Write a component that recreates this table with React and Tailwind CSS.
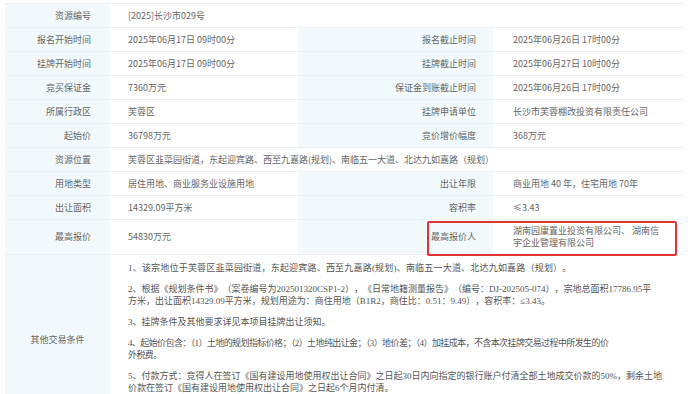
import React from "react";

const font = { fontFamily: '"Noto Sans CJK SC", "Noto Sans", sans-serif' };

function Label({ children, className = "" }) {
  return (
    <div className={"bg-[#f1f9fd] flex items-center justify-end pr-[19px] text-[#666] whitespace-nowrap " + className}>
      {children}
    </div>
  );
}
function RLabel({ children }) {
  return (
    <div className="bg-[#f1f9fd] flex items-center justify-end pr-[17px] text-[#666] whitespace-nowrap">
      {children}
    </div>
  );
}
function Val({ children, className = "" }) {
  return <div className={"flex items-center pl-[18px] text-[#666] whitespace-nowrap " + className}>{children}</div>;
}
function RVal({ children, className = "" }) {
  return <div className={"flex items-center pl-[20px] pr-[20px] text-[#666] " + className}>{children}</div>;
}

const rowCls = "grid grid-cols-[105px_188px_195px_190px] h-[24px] border-b border-[#eceff1]";

export default function App() {
  const rows = [
    ["报名开始时间", "2025年06月17日 09时00分", "报名截止时间", "2025年06月26日 17时00分"],
    ["挂牌开始时间", "2025年06月17日 09时00分", "挂牌截止时间", "2025年06月27日 10时00分"],
    ["竞买保证金", "7360万元", "保证金到账截止时间", "2025年06月26日 17时00分"],
    ["所属行政区", "芙蓉区", "挂牌申请单位", "长沙市芙蓉棚改投资有限责任公司"],
    ["起始价", "36798万元", "竞价增价幅度", "368万元"],
  ];
  const contentFont = { fontFamily: '"Liberation Serif", "Noto Sans CJK SC", serif' };
  return (
    <div className="w-[692px] h-[394px] overflow-hidden bg-white text-[9px] leading-[12px]" style={font}>
      <div className="pt-[3px] pl-[5px]">
        <div className="w-[678px] border-t border-[#eceff1]">
          <div className="grid grid-cols-[105px_573px] h-[24px] border-b border-[#eceff1]">
            <Label>资源编号</Label>
            <Val>[2025]长沙市029号</Val>
          </div>
          {rows.map((r) => (
            <div key={r[0]} className={rowCls}>
              <Label>{r[0]}</Label>
              <Val>{r[1]}</Val>
              <RLabel>{r[2]}</RLabel>
              <RVal>{r[3]}</RVal>
            </div>
          ))}
          <div className="grid grid-cols-[105px_573px] h-[24px] border-b border-[#eceff1]">
            <Label>资源位置</Label>
            <Val>芙蓉区韭菜园街道，东起迎宾路、西至九嘉路(规划)、南临五一大道、北达九如嘉路（规划）</Val>
          </div>
          <div className={rowCls}>
            <Label>用地类型</Label>
            <Val>居住用地、商业服务业设施用地</Val>
            <RLabel>出让年限</RLabel>
            <RVal className="whitespace-nowrap">商业用地 40 年，住宅用地 70年</RVal>
          </div>
          <div className={rowCls}>
            <Label>出让面积</Label>
            <Val>14329.09平方米</Val>
            <RLabel>容积率</RLabel>
            <RVal>≤3.43</RVal>
          </div>
          <div className="relative grid grid-cols-[105px_188px_195px_190px] h-[35px] border-b border-[#eceff1]">
            <Label>最高报价</Label>
            <Val>54830万元</Val>
            <RLabel>最高报价人</RLabel>
            <RVal className="pr-[18px]">湖南园康置业投资有限公司、 湖南信宇企业管理有限公司</RVal>
            <div className="absolute left-[422px] top-[1px] w-[250px] h-[35px] border-2 border-[#e0342f] rounded-[2px] pointer-events-none" />
          </div>
          <div className="grid grid-cols-[105px_573px] h-[170px] border-b border-[#eceff1]">
            <div className="bg-[#f1f9fd] flex items-center justify-center text-[#666]">其他交易条件</div>
            <div className="pl-[18px] pt-[7px] text-[#555] flex flex-col gap-[9px] whitespace-nowrap" style={contentFont}>
              <div className="[text-spacing-trim:space-all] tracking-[0.2px]">1、该宗地位于芙蓉区韭菜园街道，东起迎宾路、西至九嘉路(规划)、南临五一大道、北达九如嘉路（规划）。</div>
              <div className="[text-spacing-trim:space-all]">
                <div>2、根据《规划条件书》（案卷编号为202501320CSP1-2），《日常地籍测量报告》（编号：DJ-202505-074），宗地总面积17786.95平</div>
                <div>方米，出让面积14329.09平方米，规划用途为：商住用地（B1R2，商住比：0.51：9.49），容积率：≤3.43。</div>
              </div>
              <div className="[text-spacing-trim:space-all]">3、挂牌条件及其他要求详见本项目挂牌出让须知。</div>
              <div className="tracking-[-0.6px]">
                <div>4、起始价包含：（1）土地的规划指标价格；（2）土地纯出让金；（3）地价差；（4）加挂成本，不含本次挂牌交易过程中所发生的价</div>
                <div>外税费。</div>
              </div>
              <div className="[text-spacing-trim:space-all]">
                <div>5、付款方式：竞得人在签订《国有建设用地使用权出让合同》之日起30日内向指定的银行账户付清全部土地成交价款的50%，剩余土地</div>
                <div>价款在签订《国有建设用地使用权出让合同》之日起6个月内付清。</div>
              </div>
            </div>
          </div>
        </div>
      </div>
    </div>
  );
}
